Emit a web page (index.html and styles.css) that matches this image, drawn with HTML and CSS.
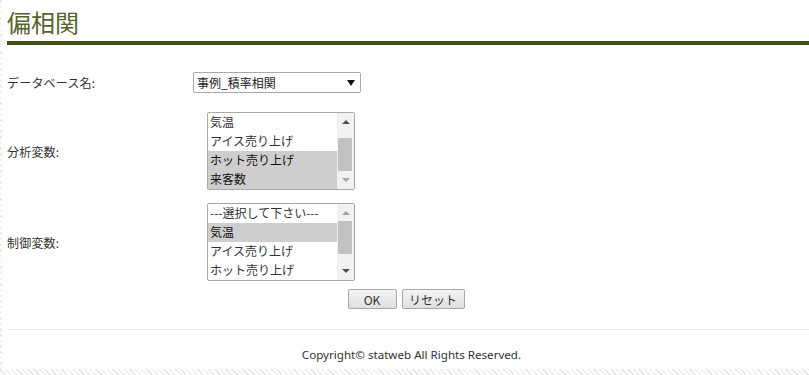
FILE: index.html
```html
<!DOCTYPE html>
<html>
<head>
    <title>偏相関</title>
    <meta charset="utf-8">
    <link rel="stylesheet" href="styles.css">
</head>
<body>

    <div id="page">
        <h1 class="title">偏相関</h1>

        <form class="calc-form">
            <div class="row row-db">
                <label class="label">データベース名:</label>
                <span class="select-wrap">
                    <select class="db-select">
                        <option>事例_積率相関</option>
                    </select>
                </span>
            </div>

            <div class="row row-vars">
                <label class="label">分析変数:</label>
                <span class="list-wrap">
                    <select class="listbox" multiple size="4">
                        <option>気温</option>
                        <option>アイス売り上げ</option>
                        <option selected>ホット売り上げ</option>
                        <option selected>来客数</option>
                    </select>
                    <span class="fake-scroll">
                        <span class="arrow arrow-up"></span>
                        <span class="thumb thumb-bottom"></span>
                        <span class="arrow arrow-down off"></span>
                    </span>
                </span>
            </div>

            <div class="row row-ctrl">
                <label class="label">制御変数:</label>
                <span class="list-wrap">
                    <select class="listbox" multiple size="4">
                        <option>---選択して下さい---</option>
                        <option selected>気温</option>
                        <option>アイス売り上げ</option>
                        <option>ホット売り上げ</option>
                        <option>来客数</option>
                    </select>
                    <span class="fake-scroll">
                        <span class="arrow arrow-up off"></span>
                        <span class="thumb thumb-top"></span>
                        <span class="arrow arrow-down"></span>
                    </span>
                </span>
            </div>

            <div class="buttons">
                <button type="button" class="btn btn-ok">OK</button>
                <button type="reset" class="btn btn-reset">リセット</button>
            </div>
        </form>

        <div id="footer">
            <p>Copyright© statweb All Rights Reserved.</p>
        </div>
    </div>

</body>
</html>
```

FILE: styles.css
```css
* {
    margin: 0;
    padding: 0;
    box-sizing: border-box;
}

body {
    background: repeating-linear-gradient(45deg, #e4e4e4 0px, #e4e4e4 1px, #ffffff 1px, #ffffff 4px);
    font-family: "Noto Sans CJK JP", "Noto Sans", sans-serif;
    font-size: 12px;
    color: #333;
    overflow: hidden;
}

#page {
    margin-left: 2px;
    background: #fff;
    padding-left: 5px;
    height: 369px;
}

.title {
    font-size: 24px;
    font-weight: normal;
    line-height: 39px;
    padding-top: 2px;
    color: #55632c;
    border-bottom: 4px solid #3f5016;
}

.calc-form {
    padding-top: 27px;
}

.row {
    display: grid;
    grid-template-columns: 186px auto;
    align-items: center;
    justify-items: start;
}

.row-vars {
    margin-top: 19px;
}

.row-ctrl {
    margin-top: 13px;
}

.label {
    color: #333;
    font-size: 12px;
    letter-spacing: 0.2px;
}

.select-wrap {
    position: relative;
    display: inline-block;
}

.select-wrap::after {
    content: "";
    position: absolute;
    right: 6px;
    top: 8px;
    border-left: 4px solid transparent;
    border-right: 4px solid transparent;
    border-top: 6px solid #111;
    pointer-events: none;
}

.db-select {
    appearance: none;
    -webkit-appearance: none;
    width: 168px;
    height: 21px;
    border: 1px solid #a9a9a9;
    border-radius: 2px;
    background: #fff;
    font-family: inherit;
    font-size: 12px;
    color: #222;
    padding-left: 3px;
    line-height: 19px;
}

.list-wrap {
    position: relative;
    display: inline-block;
    margin-left: 14px;
}

.listbox {
    display: block;
    width: 148px;
    height: 78px;
    border: 1px solid #a9a9a9;
    font-family: inherit;
    font-size: 12px;
    color: #333;
    outline: none;
    overflow: hidden;
}

.listbox option {
    height: 19px;
    line-height: 19px;
    padding: 0 19px 0 2px;
}

/* scrollbar drawn over the list */
.fake-scroll {
    position: absolute;
    top: 1px;
    right: 1px;
    bottom: 1px;
    width: 17px;
    background: #f1f1f1;
}

.arrow {
    position: absolute;
    left: 5px;
    width: 0;
    height: 0;
    border-left: 4px solid transparent;
    border-right: 4px solid transparent;
}

.arrow-up {
    top: 7px;
    border-bottom: 4px solid #505050;
}

.arrow-down {
    bottom: 7px;
    border-top: 4px solid #505050;
}

.arrow-up.off {
    border-bottom-color: #a3a3a3;
}

.arrow-down.off {
    border-top-color: #a3a3a3;
}

.thumb {
    position: absolute;
    left: 1px;
    width: 14px;
    height: 33px;
    background: #c1c1c1;
}

.thumb-top {
    top: 17px;
}

.thumb-bottom {
    top: 25px;
}

.buttons {
    display: flex;
    justify-content: center;
    gap: 5px;
    margin-top: 8px;
    margin-left: -4px;
}

.btn {
    height: 20px;
    font-family: inherit;
    font-size: 12px;
    color: #333;
    background: linear-gradient(#f4f4f4, #dfdfdf);
    border: 1px solid #a8a8a8;
    border-radius: 2px;
}

.btn-ok {
    width: 49px;
}

.btn-reset {
    width: 63px;
}

#footer {
    margin-top: 20px;
    border-top: 1px solid #e8e8e8;
    text-align: center;
    padding-top: 16px;
}

#footer p {
    font-family: "Noto Sans", sans-serif;
    font-size: 11.6px;
    color: #333;
    line-height: 18px;
    margin-left: 7px;
}
```
